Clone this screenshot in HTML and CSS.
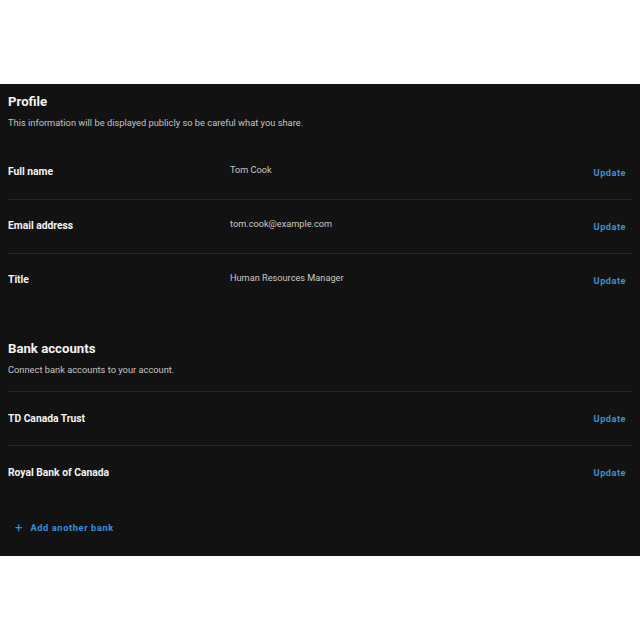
FILE: index.html
```html
<!DOCTYPE html>
<html>
<head>
<meta charset="utf-8">
<link rel="stylesheet" href="styles.css">
</head>
<body>
<div class="top-space"></div>
<main class="panel">
  <section class="section">
    <h2 class="section-title">Profile</h2>
    <p class="section-desc">This information will be displayed publicly so be careful what you share.</p>
    <dl class="list">
      <div class="row first">
        <dt class="label">Full name</dt>
        <dd class="value">Tom Cook</dd>
        <button class="link">Update</button>
      </div>
      <div class="row">
        <dt class="label">Email address</dt>
        <dd class="value">tom.cook@example.com</dd>
        <button class="link">Update</button>
      </div>
      <div class="row">
        <dt class="label">Title</dt>
        <dd class="value">Human Resources Manager</dd>
        <button class="link">Update</button>
      </div>
    </dl>
  </section>
  <section class="section bank">
    <h2 class="section-title">Bank accounts</h2>
    <p class="section-desc">Connect bank accounts to your account.</p>
    <ul class="list banks">
      <li class="row">
        <span class="label">TD Canada Trust</span>
        <button class="link">Update</button>
      </li>
      <li class="row">
        <span class="label">Royal Bank of Canada</span>
        <button class="link">Update</button>
      </li>
    </ul>
    <div class="add-row">
      <button class="link add"><span class="plus">+</span>Add another bank</button>
    </div>
  </section>
</main>
</body>
</html>
```
FILE: styles.css
```css
* { box-sizing: border-box; }
html, body { margin: 0; padding: 0; background: #ffffff; }
body { font-family: Roboto, "Liberation Sans", sans-serif; }
.top-space { height: 84px; }
.panel {
  background: #121212;
  padding: 9px 8px 0 8px;
  height: 472px;
}
.section-title {
  margin: 0;
  font-size: 13.2px;
  line-height: 18px;
  font-weight: 700;
  color: #f4f4f4;
}
.section-desc {
  margin: 5px 0 0 0;
  font-size: 9.3px;
  line-height: 14px;
  color: #c4c4c4;
}
.list { margin: 15px 0 0 0; padding: 0; list-style: none; }
.row {
  display: flex;
  align-items: center;
  height: 54px;
  border-top: 1px solid #262626;
}
.row.first { border-top-color: transparent; }
.label {
  width: 222px;
  font-size: 10.3px;
  font-weight: 700;
  color: #f4f4f4;
  margin: -2px 0 0 0;
}
.value {
  flex: 1;
  margin: 0;
  font-size: 9.2px;
  color: #c8c8c8;
  align-self: center;
  margin-top: -6px;
}
.banks .label { flex: 1; margin-top: 0; }
.link {
  background: none;
  border: 0;
  padding: 0 6px 0 0;
  margin: 0;
  font-family: inherit;
  font-size: 9.2px;
  font-weight: 700;
  letter-spacing: 0.5px;
  color: #3d8fd8;
}
.bank { margin-top: 33px; }
.bank .list { margin-top: 14px; }
.add-row {
  display: flex;
  align-items: center;
  height: 56px;
  border-top: 1px solid transparent;
}
.add { padding-left: 7px; display: flex; align-items: center; letter-spacing: 0.65px; }
.plus { font-size: 13px; font-weight: 400; margin-right: 8px; letter-spacing: 0; }
```
